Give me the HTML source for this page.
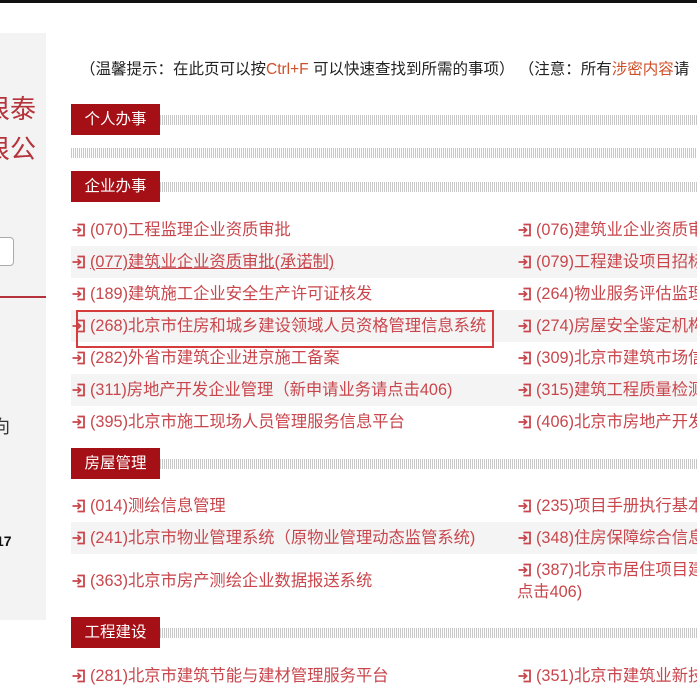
<!DOCTYPE html>
<html><head><meta charset="utf-8"><style>
*{margin:0;padding:0;box-sizing:border-box}
body{width:697px;height:683px;overflow:hidden;background:#fff;font-family:"Liberation Sans","Noto Sans CJK SC",sans-serif;position:relative}
.top{position:absolute;left:0;top:0;width:697px;height:3px;background:#111}
.side{position:absolute;left:0;top:33px;width:46px;height:587px;background:#f3f3f3;overflow:hidden}
.abs{position:absolute;white-space:nowrap}
.tip{left:80px;top:57px;font-size:15.5px;color:#222}
.tip b{font-weight:normal;color:#d0502a}
.hd{position:absolute;left:71px;height:31px;width:89px;background:#a50f16;color:#fff;font-size:15.5px;line-height:31px;text-align:center}
.dot{position:absolute;left:160px;right:0;height:10px;background-image:linear-gradient(90deg,#c8c8c8 1px,transparent 1px),linear-gradient(#fff 1px,transparent 1px);background-size:2px 2px;background-color:#fff}
.row{position:absolute;left:71px;right:0;height:32px}
.row.g{background:#f4f4f4}
.it{position:absolute;top:0;line-height:32px;font-size:16.3px;color:#c8464c;white-space:nowrap}
.it svg{vertical-align:-2px;margin-right:4px}
.u{text-decoration:underline}
</style></head><body>
<div class="top"></div>
<div class="side">
 <div class="abs" style="left:-16px;top:56px;font-size:26px;color:#b5323a;line-height:40px">恨泰<br>恨公</div>
 <div class="abs" style="left:-10px;top:204px;width:24px;height:29px;border:1px solid #aaa;border-radius:4px;background:#fff"></div>
 <div class="abs" style="left:0;top:263px;width:46px;height:2px;background:#b5323a"></div>
 <div class="abs" style="left:-8px;top:380px;font-size:18px;color:#333">向</div>
 <div class="abs" style="left:-4px;top:500px;font-size:14px;font-weight:bold;color:#111">17</div>
</div>
<div class="abs tip">（温馨提示：在此页可以按<b>Ctrl+F</b> 可以快速查找到所需的事项） （注意：所有<b>涉密内容</b>请</div>

<div class="hd" style="top:104px">个人办事</div><div class="dot" style="top:115px"></div>
<div class="dot" style="top:148px;left:71px"></div>
<div class="hd" style="top:171px">企业办事</div><div class="dot" style="top:182px"></div>

<svg width="0" height="0" style="position:absolute"><defs><symbol id="i" viewBox="0 0 14 14"><path d="M6 1.5H12.5V12.5H6M1 7H9M6 4L9 7L6 10" fill="none" stroke="#c8464c" stroke-width="1.8"/></symbol></defs></svg>

<div class="row" style="top:214px"><div class="it" style="left:0"><svg width="15" height="14"><use href="#i"/></svg>(070)工程监理企业资质审批</div><div class="it" style="left:446px"><svg width="15" height="14"><use href="#i"/></svg>(076)建筑业企业资质审批</div></div>
<div class="row g" style="top:246px"><div class="it" style="left:0"><svg width="15" height="14"><use href="#i"/></svg><span class="u">(077)建筑业企业资质审批(承诺制)</span></div><div class="it" style="left:446px"><svg width="15" height="14"><use href="#i"/></svg>(079)工程建设项目招标</div></div>
<div class="row" style="top:278px"><div class="it" style="left:0"><svg width="15" height="14"><use href="#i"/></svg>(189)建筑施工企业安全生产许可证核发</div><div class="it" style="left:446px"><svg width="15" height="14"><use href="#i"/></svg>(264)物业服务评估监理</div></div>
<div class="row g" style="top:310px"><div class="it" style="left:0"><svg width="15" height="14"><use href="#i"/></svg>(268)北京市住房和城乡建设领域人员资格管理信息系统</div><div class="it" style="left:446px"><svg width="15" height="14"><use href="#i"/></svg>(274)房屋安全鉴定机构</div></div>
<div class="row" style="top:342px"><div class="it" style="left:0"><svg width="15" height="14"><use href="#i"/></svg>(282)外省市建筑企业进京施工备案</div><div class="it" style="left:446px"><svg width="15" height="14"><use href="#i"/></svg>(309)北京市建筑市场信</div></div>
<div class="row g" style="top:374px"><div class="it" style="left:0"><svg width="15" height="14"><use href="#i"/></svg>(311)房地产开发企业管理（新申请业务请点击406)</div><div class="it" style="left:446px"><svg width="15" height="14"><use href="#i"/></svg>(315)建筑工程质量检测</div></div>
<div class="row" style="top:406px"><div class="it" style="left:0"><svg width="15" height="14"><use href="#i"/></svg>(395)北京市施工现场人员管理服务信息平台</div><div class="it" style="left:446px"><svg width="15" height="14"><use href="#i"/></svg>(406)北京市房地产开发</div></div>
<div class="abs" style="left:76px;top:310px;width:418px;height:38px;border:2px solid #d63c3c"></div>

<div class="hd" style="top:448px">房屋管理</div><div class="dot" style="top:459px"></div>
<div class="row" style="top:490px"><div class="it" style="left:0"><svg width="15" height="14"><use href="#i"/></svg>(014)测绘信息管理</div><div class="it" style="left:446px"><svg width="15" height="14"><use href="#i"/></svg>(235)项目手册执行基本</div></div>
<div class="row g" style="top:522px"><div class="it" style="left:0"><svg width="15" height="14"><use href="#i"/></svg>(241)北京市物业管理系统（原物业管理动态监管系统)</div><div class="it" style="left:446px"><svg width="15" height="14"><use href="#i"/></svg>(348)住房保障综合信息</div></div>
<div class="row" style="top:554px;height:56px"><div class="it" style="left:0;line-height:54px"><svg width="15" height="14"><use href="#i"/></svg>(363)北京市房产测绘企业数据报送系统</div><div class="it" style="left:446px;line-height:22px;top:5px"><svg width="15" height="14"><use href="#i"/></svg>(387)北京市居住项目建<br>点击406)</div></div>

<div class="hd" style="top:617px">工程建设</div><div class="dot" style="top:628px"></div>
<div class="row" style="top:660px"><div class="it" style="left:0"><svg width="15" height="14"><use href="#i"/></svg>(281)北京市建筑节能与建材管理服务平台</div><div class="it" style="left:446px"><svg width="15" height="14"><use href="#i"/></svg>(351)北京市建筑业新技</div></div>
</body></html>
